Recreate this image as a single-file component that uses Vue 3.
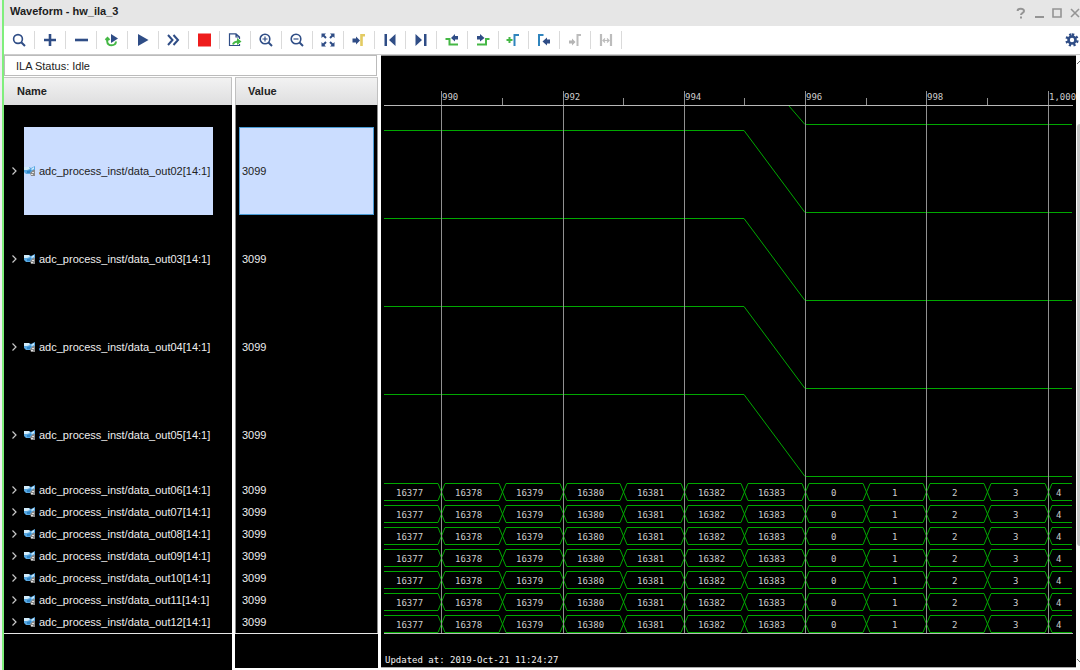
<script setup>
import { ref } from 'vue'

const tools = [
  { id: 'search', label: 'Search' },
  { id: 'add', label: 'Add probes' },
  { id: 'remove', label: 'Remove probes' },
  { id: 'rerun', label: 'Auto re-trigger' },
  { id: 'run', label: 'Run trigger' },
  { id: 'runnow', label: 'Run trigger immediate' },
  { id: 'stop', label: 'Stop trigger' },
  { id: 'export', label: 'Export data' },
  { id: 'zoomin', label: 'Zoom in' },
  { id: 'zoomout', label: 'Zoom out' },
  { id: 'fit', label: 'Zoom fit' },
  { id: 'cursor', label: 'Go to cursor' },
  { id: 'first', label: 'Go to first sample' },
  { id: 'last', label: 'Go to last sample' },
  { id: 'prevedge', label: 'Previous transition' },
  { id: 'nextedge', label: 'Next transition' },
  { id: 'addmarker', label: 'Add marker' },
  { id: 'prevmarker', label: 'Previous marker' },
  { id: 'nextmarker', label: 'Next marker', disabled: true },
  { id: 'swap', label: 'Swap cursors', disabled: true },
]

const selected = ref('02')
const signals = ['02', '03', '04', '05', '06', '07', '08', '09', '10', '11', '12'].map((id, i) => ({
  id,
  name: `adc_process_inst/data_out${id}[14:1]`,
  value: '3099',
  analog: i < 4,
}))

const left = 3
const right = 691
const step = 60.65
const edges = Array.from({ length: 11 }, (_, i) => Math.round(60.2 + i * step))
const ticks = edges.map((x, i) => ({
  x: x + 0.5,
  major: i % 2 === 0,
  label: (990 + i).toLocaleString('en-US'),
}))

const fall = edges[5]
const low = edges[6]
const analogPaths = [0, 1, 2, 3].map((i) => {
  const y = 74.5 + i * 88
  return `M${left} ${y}H${fall}L${low} ${y + 82}H${right}`
})

const samples = ['16377', '16378', '16379', '16380', '16381', '16382', '16383', '0', '1', '2', '3', '4']
const bounds = [left, ...edges, right]
const sampleText = samples.map((text, i) => ({
  text,
  x: Math.floor((bounds[i] + bounds[i + 1]) / 2 - text.length * 3) - 1,
}))

function busPath(top, startHigh) {
  const bottom = top + 17
  let high = startHigh
  let d = `M${left} ${high ? top : bottom}`
  for (const x of edges) {
    d += `H${x - 3}`
    high = !high
    d += `L${x + 4} ${high ? top : bottom}`
  }
  return d + `H${right}`
}
const buses = [0, 1, 2, 3, 4, 5, 6].map((i) => {
  const top = 427.5 + i * 22
  return { top, d: busPath(top, true) + busPath(top, false) }
})
</script>

<template>
  <div class="window">
    <header class="title">
      <h1>Waveform - hw_ila_3</h1>
      <div class="controls">
        <button aria-label="Help">
          <svg width="12" height="12" viewBox="0 0 12 12"><path d="M2.6 4C2.6 1 9 1 9 4C9 6 6 5.6 6 8M6 9.5V11.4" /></svg>
        </button>
        <button aria-label="Minimize">
          <svg width="12" height="12" viewBox="0 0 12 12"><path d="M2 10H11" /></svg>
        </button>
        <button aria-label="Maximize">
          <svg width="12" height="12" viewBox="0 0 12 12"><path class="thin" d="M2 2H10V10H2Z" /></svg>
        </button>
        <button aria-label="Close">
          <svg width="12" height="12" viewBox="0 0 12 12"><path class="thin" d="M2 2L10 10M10 2L2 10" /></svg>
        </button>
      </div>
    </header>

    <div class="toolbar">
      <div class="tools">
        <button v-for="t in tools" :key="t.id" :aria-label="t.label" :disabled="t.disabled">
          <svg width="16" height="16" viewBox="0 0 16 16">
            <g v-if="t.id === 'search'" class="ln"><circle cx="7" cy="7" r="4.4" /><path class="w2" d="M10.2 10.2L14 14" /></g>
            <path v-else-if="t.id === 'add'" class="ln w3" d="M8 2V14M2 8H14" />
            <path v-else-if="t.id === 'remove'" class="ln w3" d="M2 8H15" />
            <g v-else-if="t.id === 'rerun'">
              <path class="gr w2" d="M3.2 6.5V9.5C3.6 14.5 11.5 14.5 12 9.5M1.5 8L3.5 6L5.5 8" />
              <path class="fl" d="M7 2L14 6.5L7 11Z" />
            </g>
            <path v-else-if="t.id === 'run'" class="fl" d="M3 2L13.5 8L3 14Z" />
            <path v-else-if="t.id === 'runnow'" class="ln w2" d="M3 3L7.5 8L3 13M8.5 3L13 8L8.5 13" />
            <path v-else-if="t.id === 'stop'" class="red" d="M2 1.5H15V14.5H2Z" />
            <g v-else-if="t.id === 'export'">
              <path class="ln w1" d="M12.5 7V5L9 1.8H2.5V13.5H12.5V12M9 2V5H12" />
              <path class="gr w2" d="M6 12.5C6.5 10 8 9.5 12 9.5" />
              <path class="gf" d="M10 6L14.5 9.5L10 13Z" />
            </g>
            <g v-else-if="t.id === 'zoomin'" class="ln"><circle cx="7" cy="7" r="4.8" /><path class="w1" d="M7 4.5V9.5M4.5 7H9.5" /><path class="w2" d="M10.5 10.5L14 14" /></g>
            <g v-else-if="t.id === 'zoomout'" class="ln"><circle cx="7" cy="7" r="4.8" /><path class="w1" d="M4.5 7H9.5" /><path class="w2" d="M10.5 10.5L14 14" /></g>
            <g v-else-if="t.id === 'fit'">
              <path class="ln w2" d="M3 3L6 6M13 3L10 6M3 13L6 10M13 13L10 10" />
              <path class="fl" d="M1.5 1.5H6L1.5 6ZM14.5 1.5H10L14.5 6ZM1.5 14.5V10L6 14.5ZM14.5 14.5V10L10 14.5Z" />
            </g>
            <g v-else-if="t.id === 'cursor'">
              <path class="fl" d="M1.5 6.5H5V4.5L9 8.5L5 12.5V10.5H1.5Z" />
              <path class="yl w3" d="M10.5 14V3.2H14" />
            </g>
            <path v-else-if="t.id === 'first'" class="fl" d="M2.5 2H5V14H2.5ZM13.5 2V14L7 8Z" />
            <path v-else-if="t.id === 'last'" class="fl" d="M11 2H13.5V14H11ZM2.5 2V14L9 8Z" />
            <g v-else-if="t.id === 'prevedge'">
              <path class="gr w2" d="M1.5 7H5.5V12.5H14" />
              <path class="fl" d="M14 4H11V2L7 6L11 9.5V7.5H14Z" />
            </g>
            <g v-else-if="t.id === 'nextedge'">
              <path class="gr w2" d="M2 12.5H11V7H14.5" />
              <path class="fl" d="M2 4H5V2L9.5 6L5 9.5V7.5H2Z" />
            </g>
            <g v-else-if="t.id === 'addmarker'">
              <path class="gr w2" d="M1.5 8H7.5M4.5 5V11" />
              <path class="bl w2" d="M9.5 14V3H14" />
            </g>
            <g v-else-if="t.id === 'prevmarker'">
              <path class="bl w2" d="M3 14V3H7.5" />
              <path class="fl" d="M14 7.5H11V5.5L6.5 9.5L11 13.5V11.5H14Z" />
            </g>
            <g v-else-if="t.id === 'nextmarker'">
              <path class="gy" d="M2 8.5H5V6.5L8.5 10L5 13.5V11.5H2Z" />
              <path class="gl w2" d="M10.5 14V3H14" />
            </g>
            <path v-else class="gl w1" d="M2.5 2V14M3.5 2V14M12.5 2V14M13.5 2V14M5 8.5H11M7 6.5L5 8.5L7 10.5M9 6.5L11 8.5L9 10.5" />
          </svg>
        </button>
      </div>
      <button class="settings" aria-label="Settings">
        <svg width="14" height="14" viewBox="0 0 14 14">
          <path class="ln w3" stroke-dasharray="2.2 2.2" d="M7 1.6A5.4 5.4 0 1 1 6.99 1.6" />
          <circle class="ln w3" cx="7" cy="7" r="3.5" />
        </svg>
      </button>
    </div>

    <main class="body">
      <section class="list">
        <p class="status">ILA Status: Idle</p>
        <table>
          <thead>
            <tr><th class="name" scope="col">Name</th><th class="value" scope="col">Value</th></tr>
          </thead>
          <tbody>
            <tr class="gap"><td class="name"></td><td class="value"></td></tr>
            <tr v-for="s in signals" :key="s.id" :class="{ tall: s.analog, selected: s.id === selected }" @click="selected = s.id">
              <td class="name">
                <div class="cell">
                  <button :aria-label="'Expand ' + s.name">
                    <svg width="7" height="10" viewBox="0 0 7 10"><path d="M1.5 1.5L5 5L1.5 8.5" /></svg>
                  </button>
                  <span class="label">
                    <svg width="12" height="12" viewBox="0 0 12 12">
                      <path fill="#58a8e2" d="M0 2H5L7 3L11 1V6L7 9H2L0 7Z" />
                      <path fill="#d2ecfb" d="M0 2H5L6 4L3 5H0ZM7 4L10 2V4L8 5Z" />
                      <path fill="#2f86c8" d="M3 6L7 5L6 8H3Z" />
                      <path fill="#8a8a8a" d="M6 8L9 5L11 5V11H7Z" />
                      <path fill="#e2e2e2" d="M8 7H10V8H8ZM7 9H9V10H7Z" />
                    </svg>
                    {{ s.name }}
                  </span>
                </div>
              </td>
              <td class="value"><div class="cell"><span class="reading">{{ s.value }}</span></div></td>
            </tr>
          </tbody>
        </table>
        <div class="tail"><div></div><div></div></div>
      </section>

      <section class="wave">
        <svg width="100%" height="100%">
          <path class="trace" :d="`M408 50L${low} 68.5H${right}`" />
          <path v-for="(d, i) in analogPaths" :key="i" class="trace" :d="d" />
          <path v-for="b in buses" :key="b.top" class="trace" :d="b.d" />
          <g v-for="t in ticks" :key="t.x">
            <path class="grid" :d="t.major ? `M${t.x} 35V577` : `M${t.x} 42V49`" />
            <text v-if="t.major" :x="t.x + 0.5" y="44">{{ t.label }}</text>
          </g>
          <path class="rule" :d="`M${left} 49.5H692M${left} 577.5H692`" />
          <g v-for="b in buses" :key="'t' + b.top">
            <text v-for="s in sampleText" :key="s.text" :x="s.x" :y="b.top + 12.5">{{ s.text }}</text>
          </g>
          <text class="bright" x="4" y="607">Updated at: 2019-Oct-21 11:24:27</text>
        </svg>
      </section>

      <div class="scroll">
        <svg width="4" height="6" viewBox="0 0 4 6"><path d="M1 5L5 1" /></svg>
        <div class="track"><div class="thumb"></div></div>
        <svg width="4" height="6" viewBox="0 0 4 6"><path d="M1 1L5 5" /></svg>
      </div>
    </main>
  </div>
</template>

<style>
body { margin: 0; background: #fff; }
</style>

<style scoped>
* { box-sizing: border-box; }
.window {
  height: 100vh; display: flex; flex-direction: column; overflow: hidden;
  font: 11px/14px "Liberation Sans", Arial, sans-serif; color: #1c1c1c;
  background: #fff; border-left: 2px solid #f0eef2; box-shadow: inset 2px 0 #80ee7c; padding-left: 2px;
}
button { border: 0; padding: 0; background: none; display: flex; align-items: center; justify-content: center; }
svg { display: block; flex: none; fill: none; }
.title { height: 26px; flex: none; background: #e6e6e6; display: flex; justify-content: space-between; padding-left: 6px; }
.title h1 { margin: 0; font-size: 11px; line-height: 22px; }
.controls { display: flex; align-items: center; gap: 6px; margin-right: -1px; }
.controls path { stroke: #949494; stroke-width: 2; }
.controls .thin { stroke-width: 1.6; }

.toolbar { height: 29px; flex: none; display: flex; justify-content: space-between; align-items: center; border-bottom: 1px solid #ccc; }
.tools { display: flex; width: 618px; }
.tools button { flex: 1; height: 18px; border-right: 1px solid #dadada; }
.settings { width: 16px; height: 18px; }
.ln { stroke: #2f4d86; stroke-width: 1.6; }
.fl { fill: #2f4d86; }
.gr { stroke: #45b845; }
.gf { fill: #45b845; }
.yl { stroke: #e3cb62; }
.bl { stroke: #2f84bd; }
.gl { stroke: #bcbcbc; }
.gy { fill: #b4b4b4; }
.red { fill: #ee1c1c; }
.w1 { stroke-width: 1.2; }
.w2 { stroke-width: 2; }
.w3 { stroke-width: 2.6; }

.body { flex: 1; min-height: 0; display: flex; }
.list { width: 374px; flex: none; display: flex; flex-direction: column; margin-right: 3px; }
.status { margin: 0 1px 1px 0; height: 21px; flex: none; border: 1px solid #bbb; padding-left: 11px; line-height: 20px; background: #fff; }
table { width: 100%; border-spacing: 0; table-layout: fixed; }
th, td { padding: 0; text-align: left; background: #000; color: #eee; }
th {
  height: 28px; font-weight: bold; color: #222; background: linear-gradient(#f3f3f3, #dededf);
  box-shadow: inset 0 1px #c6c6c6, inset -1px 0 #c0c0c0; padding-left: 13px;
}
.name { width: 228px; }
.value { border-left: 3px solid #fff; box-shadow: inset 1px 0 #888, inset -1px 0 #888; }
th.value { box-shadow: inset 0 1px #c6c6c6, inset 1px 0 #c0c0c0, inset -1px 0 #c0c0c0; }
.gap td { height: 22px; }
.cell { height: 22px; display: flex; align-items: stretch; }
.tall .cell { height: 88px; }
.name .cell { padding-left: 5px; gap: 4px; }
.name button { width: 11px; }
.name button path { stroke: #c8c8c8; stroke-width: 1.2; }
.label { display: flex; align-items: center; gap: 3px; padding-right: 3px; white-space: nowrap; }
.value .cell { padding: 0 4px; }
.reading { flex: 1; display: flex; align-items: center; padding-left: 2px; border: 1px solid transparent; }
.selected .label, .selected .reading { background: #cbddff; color: #222; }
.selected .reading { border-color: #499bd5; }
.tail { flex: 1; display: grid; grid-template-columns: 228px 1fr; column-gap: 3px; }
.tail div { background: #000; border-top: 1px solid #e6e6e6; }
.tail div + div { margin-bottom: 2px; }

.wave { flex: 1; min-width: 0; background: #000; border-top: 1px solid #888; border-bottom: 1px solid #aaa; margin-bottom: 2px; overflow: hidden; }
.trace { stroke: #00a800; stroke-width: 1; }
.grid { stroke: #909090; stroke-width: 1; }
.rule { stroke: #b8b8b8; stroke-width: 1; }
.wave text { fill: #ccc; font: 9px "DejaVu Sans Mono", monospace; }
.wave .bright { fill: #f2f2f2; }

.scroll { width: 4px; flex: none; display: flex; flex-direction: column; padding: 4px 0 6px; background: #fafafa; }
.scroll path { stroke: #666; }
.track { flex: 1; display: flex; flex-direction: column; align-items: flex-end; padding: 59px 0 112px; }
.thumb { flex: 1; width: 3px; background: #c8c8c8; border-radius: 3px 0 0 3px; }
</style>
